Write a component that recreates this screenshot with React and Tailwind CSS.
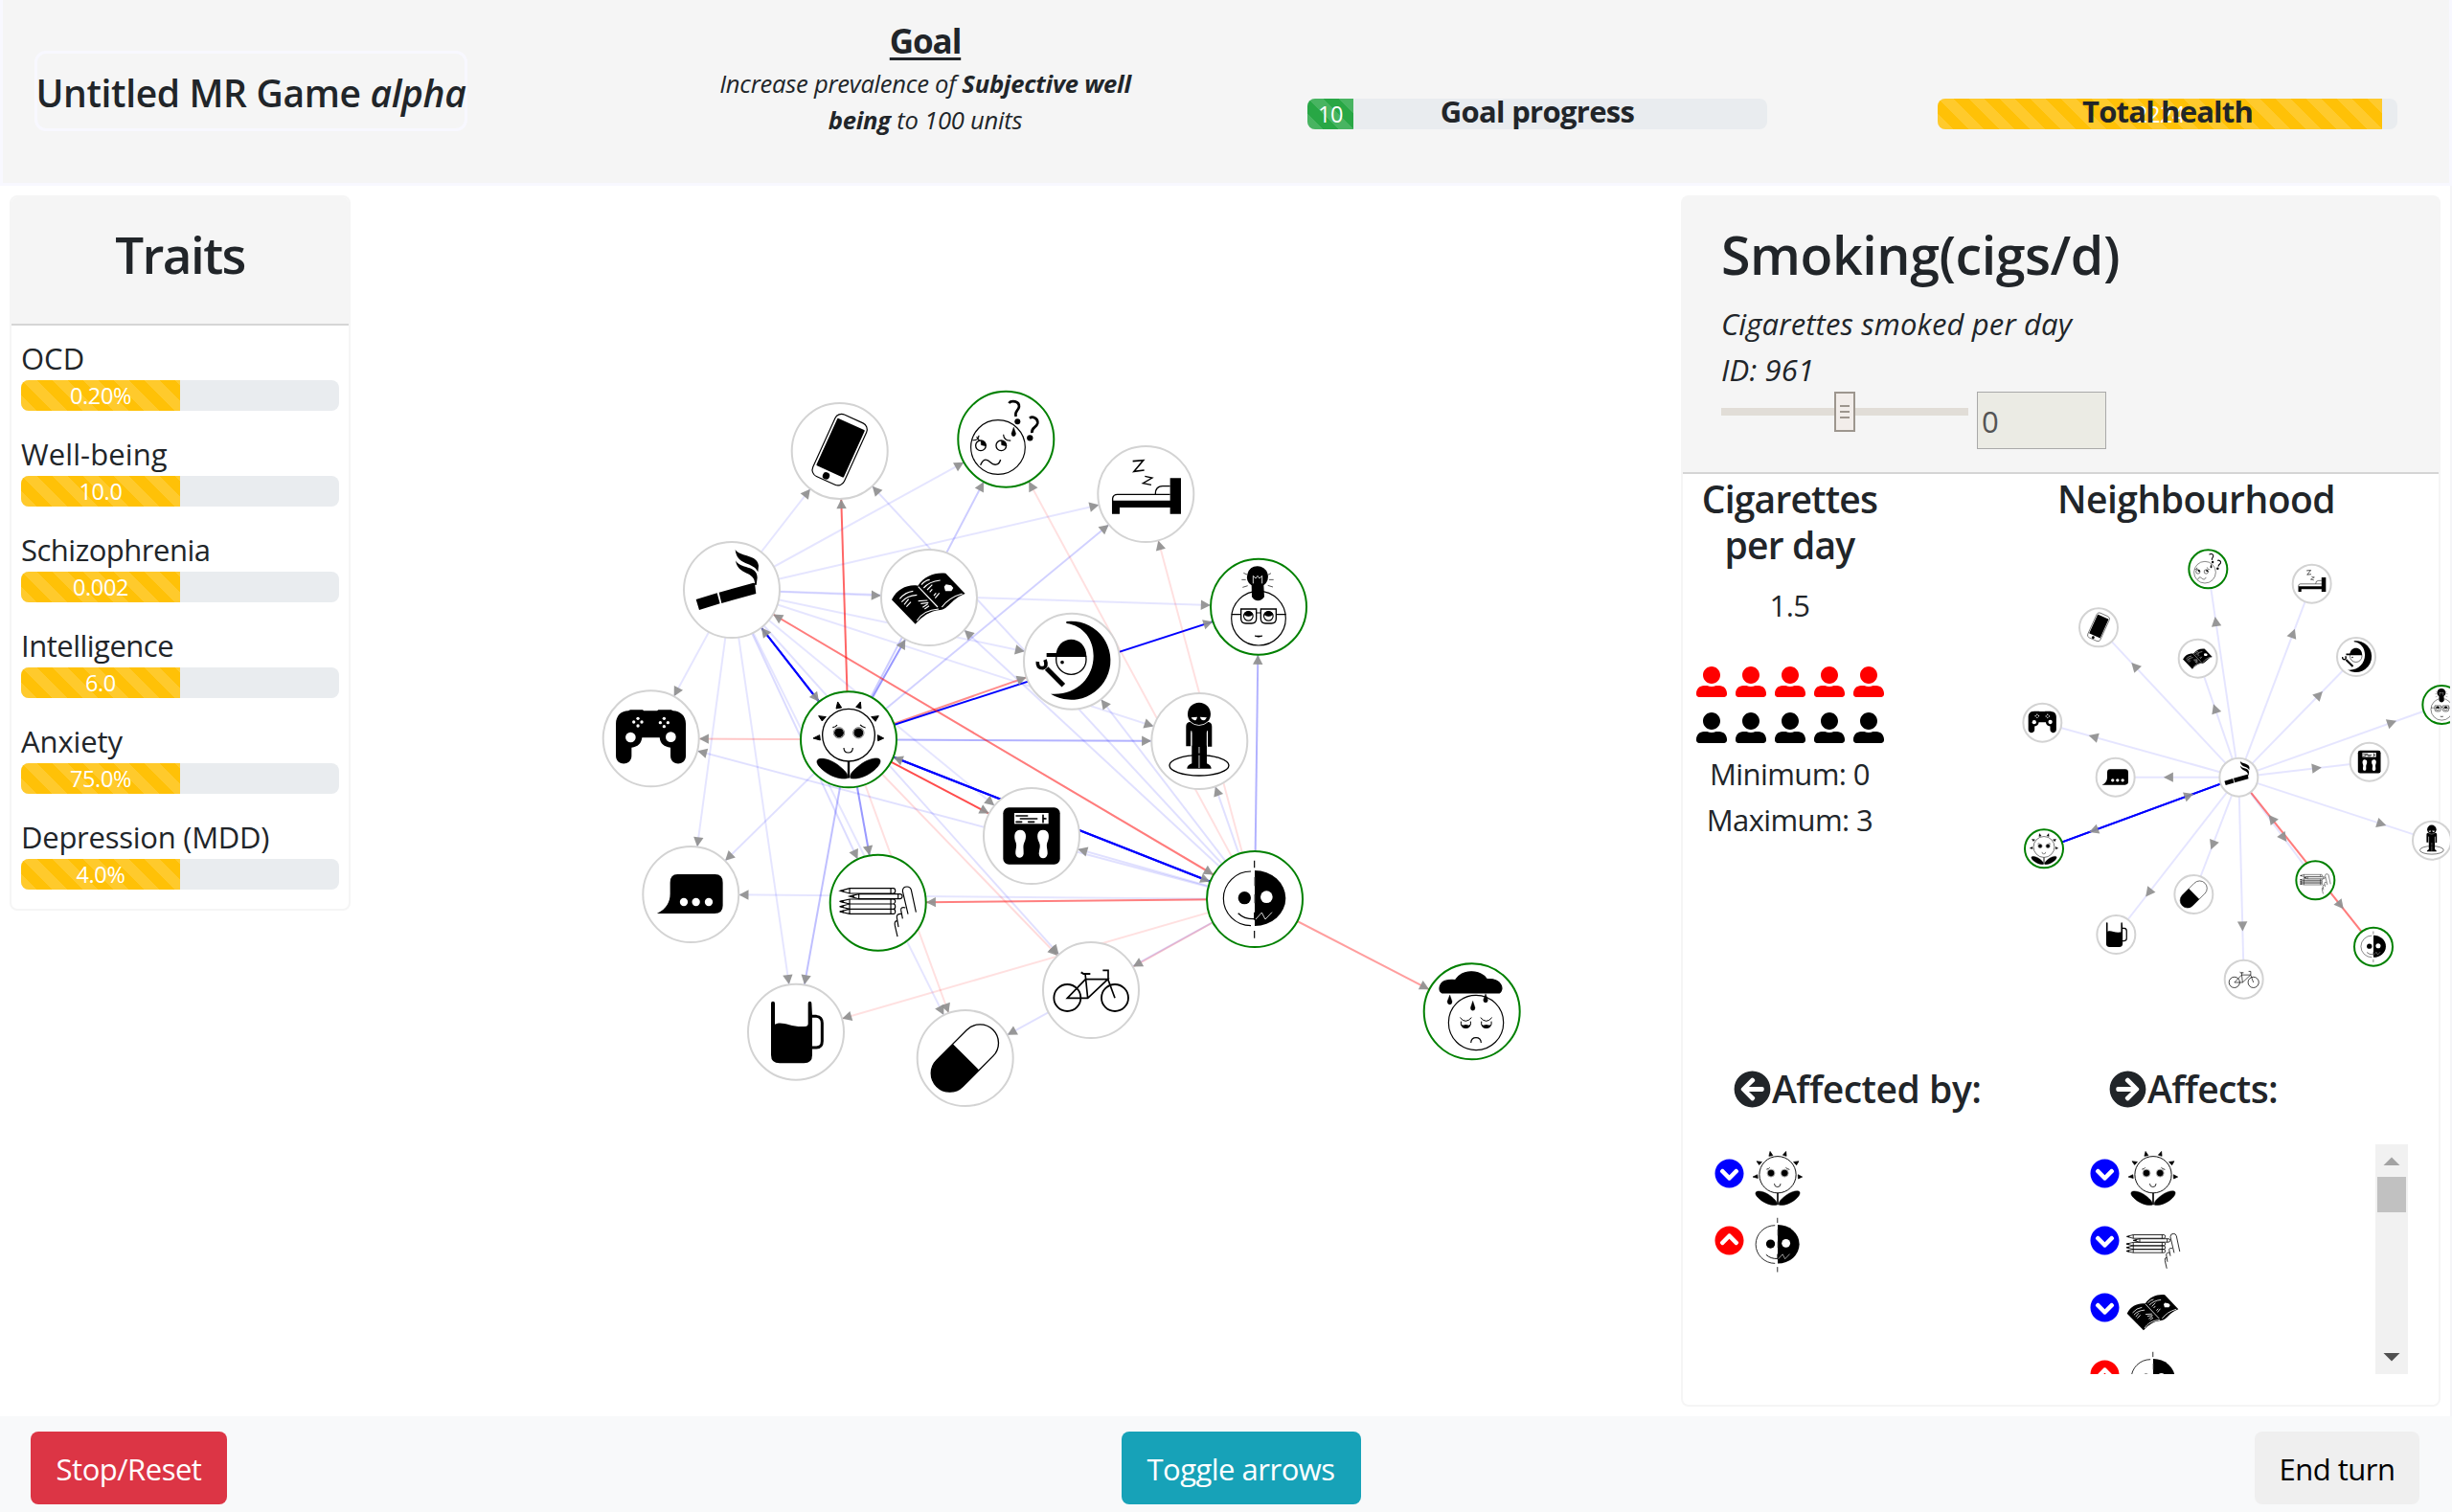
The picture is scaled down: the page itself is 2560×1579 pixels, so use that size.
import React from "react";
import {
  FaUserAlt,
  FaArrowCircleLeft,
  FaArrowCircleRight,
  FaChevronCircleDown,
  FaChevronCircleUp,
} from "react-icons/fa";

const K = "#000";
const W = "#fff";

/* Every glyph is drawn on its own grid; c is the point that sits at the node's centre. */
const GLYPHS = {
  phone: {
    c: [770, 243],
    d: (
      <g transform="translate(770 239) rotate(24.4)">
        <rect x="-54" y="-106" width="108" height="212" rx="22" fill={W} stroke={K} strokeWidth="3.5" />
        <rect x="-47" y="-88" width="94" height="163" rx="3" fill={K} />
        <circle cx="-5" cy="92" r="11" fill={K} />
      </g>
    ),
  },
  smoke: {
    c: [432, 678],
    d: (
      <g fill={K}>
        <path d="M320 708L386 688L395 721L330 741Z M392 686L500 656L504 658L508 690L400 720Z" />
        <path d="M443 551C455 575 514 566 516 602L514 622C500 588 447 604 443 551Z" />
        <path d="M444 586C456 613 513 600 512 640L509 663L504 662C508 618 450 634 444 586Z" />
      </g>
    ),
  },
  book: {
    c: [1050, 702],
    d: (
      <g fill="none">
        <path
          d="M933 709C950 674 985 660 1015 665C1035 634 1070 622 1102 626L1163 690C1120 705 1112 738 1085 741C1052 744 1030 760 1007 785Z"
          fill={K}
        />
        <g stroke={W} strokeWidth="3.5">
          <path d="M1016 668L1077 732" />
          <path d="M1012 775C1025 752 1050 740 1080 738" />
          <path d="M1090 732C1105 712 1125 698 1154 690" />
          <path d="M958 706Q975 685 1000 682M964 716Q980 696 1012 694M972 724L986 707M979 731L993 716" />
          <path d="M1026 662Q1038 648 1052 646M1033 672Q1050 652 1085 648M1044 678L1060 662M1052 685L1060 676" />
          <path d="M1016 713L1045 711M1024 721L1048 718M1030 733L1046 722M1036 738L1050 728M1065 696L1072 688M1069 704L1082 688" />
        </g>
        <path d="M1097 668L1103 661L1119 664L1126 672L1120 682L1101 682Z" fill={W} />
      </g>
    ),
  },
  worry: {
    c: [271, 206],
    d: (
      <g fill="none" stroke={K} strokeWidth="4">
        <circle cx="246" cy="231" r="85" strokeWidth="3.5" />
        <circle cx="192" cy="226" r="16" />
        <circle cx="256" cy="226" r="16" />
        <path d="M192 211A16 16 0 0 1 208 228L193 224Z M256 211A16 16 0 0 1 272 228L257 224Z" fill={K} strokeWidth="1" />
        <path d="M166 209Q186 210 186 194M179 198L188 211M263 191Q264 211 286 210" strokeWidth="3.5" />
        <path d="M191 287C202 262 214 270 223 279S249 290 254 270" />
        <path d="M295 168L302 188Q301 197 294 197Q288 196 288 188Z" fill={K} strokeWidth="1" />
        <path d="M280 93C288 83 313 86 312 104C310 118 297 116 302 135" strokeWidth="8" />
        <path d="M345 140C354 133 372 140 370 156C367 170 350 168 352 186" strokeWidth="8" />
        <circle cx="307" cy="151" r="9" fill={K} stroke="none" />
        <circle cx="346" cy="202" r="9.5" fill={K} stroke="none" />
      </g>
    ),
  },
  bed: {
    c: [709, 378],
    d: (
      <g fill="none" stroke={K} strokeWidth="4">
        <path d="M668 275L701 272L672 307L704 303" strokeWidth="5" />
        <path d="M706 322L729 327L700 344L726 349" />
        <path d="M603 398H785V328H819V440H785V420H627V440H603Z" fill={K} stroke="none" />
        <path d="M605 400V391Q607 379 620 379H785M739 378Q739 353 762 353H785" />
      </g>
    ),
  },
  bulb: {
    c: [1062, 731],
    d: (
      <g fill="none" stroke={K} strokeWidth="3.5">
        <circle cx="1062" cy="767" r="85" />
        <path
          d="M1058 604A33 33 0 0 1 1078 664L1080 700Q1072 712 1060 712Q1048 712 1041 700L1040 664A33 33 0 0 1 1058 604Z"
          fill={K}
          stroke="none"
        />
        <path d="M1045 658V634L1053 642L1059 634L1065 642L1073 634V658" stroke={W} strokeWidth="2.5" />
        <path d="M1015 625L1026 630M1009 646H1022M1012 670L1028 665M1101 626L1091 631M1109 646H1095M1107 669L1091 664" strokeWidth="2" />
        <path d="M1007 738H1055V768Q1055 783 1040 783H1022Q1007 783 1007 768ZM1069 738H1117V768Q1117 783 1102 783H1084Q1069 783 1069 768Z" strokeWidth="4" />
        <path d="M977 755H1007M1117 755H1148M1055 750H1069" />
        <circle cx="1030" cy="760" r="14.5" />
        <circle cx="1093" cy="760" r="14.5" />
        <path d="M1017 756Q1019 745 1030 745Q1041 745 1044 756Q1030 766 1017 756Z M1080 756Q1082 745 1093 745Q1104 745 1107 756Q1093 766 1080 756Z" fill={K} strokeWidth="1" />
        <path d="M1050 822Q1062 829 1074 822Z" fill={K} strokeWidth="2" />
      </g>
    ),
  },
  night: {
    c: [477, 902],
    d: (
      <g fill="none" stroke={K}>
        <path
          d="M460 777A123 123 0 1 1 411 1004C490 1010 545 955 545 885C545 835 515 790 460 783Z"
          fill={K}
          stroke="none"
        />
        <circle cx="475" cy="896" r="47" strokeWidth="4" />
        <path d="M427 888C427 815 523 815 523 888Z M398 876H430V888H398Z" fill={K} stroke="none" />
        <circle cx="447" cy="905" r="5.5" fill={K} stroke="none" />
        <path d="M398 924L451 977" strokeWidth="15" />
        <path d="M370 903Q368 923 386 923Q402 919 393 897" strokeWidth="11" />
      </g>
    ),
  },
  gamepad: {
    c: [179, 1144],
    d: (
      <g fill={W}>
        <path
          d="M69 1098C69 1072 86 1057 108 1057L114 1054H153L156 1057H198L202 1054H242L248 1057C270 1058 288 1072 288 1098V1198C288 1231 240 1231 240 1198V1172C220 1170 208 1160 206 1141H151C148 1160 138 1170 118 1172V1198C118 1231 69 1231 69 1198Z"
          fill={K}
        />
        <circle cx="115" cy="1140" r="16" />
        <circle cx="241" cy="1139" r="16" />
        <g>
          <circle cx="138" cy="1081" r="5" />
          <circle cx="138" cy="1104" r="5" />
          <circle cx="125" cy="1092" r="5" />
          <circle cx="150" cy="1092" r="5" />
          <circle cx="220" cy="1081" r="5" />
          <circle cx="220" cy="1106" r="5" />
          <circle cx="208" cy="1094" r="5" />
          <circle cx="232" cy="1094" r="5" />
        </g>
      </g>
    ),
  },
  sun: {
    c: [798, 1147],
    d: (
      <g fill={K} stroke={K} strokeWidth="3.5">
        <circle cx="798" cy="1133" r="82" fill="none" strokeWidth="4" />
        <path
          d="M764 1029L759 1050L776 1047ZM835 1029L821 1045L837 1050ZM704 1073L727 1076L715 1089ZM892 1073L869 1076L882 1090ZM687 1143L707 1133L709 1149ZM908 1143L889 1133L890 1151Z"
          strokeWidth="3"
        />
        <circle cx="768" cy="1126" r="13" />
        <circle cx="829" cy="1126" r="13" />
        <circle cx="768" cy="1126" r="17" fill="none" strokeWidth="1.5" />
        <circle cx="829" cy="1126" r="17" fill="none" strokeWidth="1.5" />
        <path d="M748 1109Q758 1108 762 1101M834 1101Q840 1108 851 1110M783 1173Q783 1188 797 1188Q811 1188 811 1173" fill="none" />
        <path d="M798 1215V1268" strokeWidth="7" />
        <path d="M700 1212C705 1203 735 1205 765 1227C785 1243 798 1255 794 1268C775 1273 740 1263 717 1242C704 1231 696 1220 700 1212ZM896 1210C891 1202 861 1205 833 1227C813 1243 800 1255 804 1268C823 1273 856 1263 879 1242C892 1231 900 1219 896 1210Z" strokeWidth="2" />
      </g>
    ),
  },
  man: {
    c: [877, 1152],
    d: (
      <g fill={K}>
        <ellipse cx="876" cy="1228" rx="93" ry="32" fill="none" stroke={K} strokeWidth="4" />
        <circle cx="876" cy="1067" r="36" />
        <path d="M846 1092H905Q916 1094 916 1106V1169H903V1120H900V1222Q914 1228 914 1238H838Q838 1228 853 1222V1120H850V1168H835V1106Q835 1094 846 1092Z" />
        <path d="M851 1078L870 1076Q868 1087 862 1087Q854 1086 851 1078ZM879 1076L900 1078Q896 1087 889 1087Q881 1086 879 1076Z" fill={W} />
        <path d="M845 1089Q875 1116 907 1089M852 1124V1166M901 1124V1166M876 1170V1190M876 1196V1236" fill="none" stroke={W} strokeWidth="2.5" />
      </g>
    ),
  },
  scale: {
    c: [291, 399],
    d: (
      <g fill={W}>
        <rect x="202" y="310" width="178" height="178" rx="18" fill={K} />
        <rect x="237" y="327" width="107" height="34" />
        <path d="M243 336H278M256 345H308M243 355H260M281 355H299M327 334V356M327 344L336 345" stroke={K} strokeWidth="5" strokeLinecap="round" />
        <path d="M255 380C275 380 277 402 268 420C263 432 267 440 266 455C264 471 243 471 241 455C240 442 246 432 242 420C234 400 237 380 255 380Z" />
        <path d="M327 380C307 380 306 402 315 420C320 432 315 440 314 455C316 473 338 473 341 455C342 442 336 432 340 420C349 400 346 380 327 380Z" />
      </g>
    ),
  },
  split: {
    c: [210, 237],
    d: (
      <g fill="none" stroke={K} strokeWidth="3.5">
        <path d="M198 150A86 85 0 0 0 198 320" />
        <path d="M210 147A97 87 0 0 1 210 321Z" fill={K} stroke="none" />
        <path d="M209 116V139M209 336V359M209 278V302" />
        <path d="M209 168V196M209 222V250" stroke="#999" />
        <circle cx="178" cy="233" r="20" fill={K} stroke="none" />
        <circle cx="247" cy="230" r="19" fill={W} stroke="none" />
        <path d="M158 281Q178 300 209 299" strokeWidth="4" />
        <path d="M213 300L232 279L243 300L264 278" stroke={W} strokeWidth="2.5" />
      </g>
    ),
  },
  chat: {
    c: [304, 582],
    d: (
      <g fill={W}>
        <path d="M239 545Q239 519 262 519H380Q404 519 404 545V617Q404 642 378 642H198C228 628 239 606 239 580Z" fill={K} />
        <circle cx="282" cy="606" r="12.5" />
        <circle cx="320" cy="606" r="12.5" />
        <circle cx="360" cy="606" r="12.5" />
      </g>
    ),
  },
  pencils: {
    c: [890, 608],
    d: (
      <g fill={W} stroke={K} strokeWidth="3.5">
        <path d="M801 563H938Q944 563 944 571T938 579H801L772 571ZM801 563V579M930 563V579" />
        <path d="M801 597H938Q944 597 944 604T938 612H801L770 604ZM801 612H938Q944 612 944 620T938 628H801L770 620ZM801 628H938Q944 628 944 636T938 643H801L770 636ZM801 597V643M930 597V643" />
        <path d="M830 581H958Q966 581 966 588T958 596H830L801 588ZM830 581V596M953 581V596" />
        <path d="M772 571L783 568V574ZM801 588L815 584V592ZM770 604L782 601V608ZM770 620L782 617V624ZM770 636L782 632V640Z" fill={K} strokeWidth="1" />
        <path d="M984 644L967 572Q967 558 981 558Q991 558 994 568L1009 638" fill="none" />
        <path d="M976 624Q960 620 962 632L967 658M963 643Q947 642 949 655L954 684M951 665Q940 664 943 680L951 714" fill="none" />
      </g>
    ),
  },
  mug: {
    c: [633, 1013],
    d: (
      <g fill={K}>
        <path d="M555 923Q555 917 561 917Q567 917 567 923V989C592 976 615 1000 666 995Q671 994 671 988V923Q671 917 677 917Q682 917 682 923L684 960V1085Q684 1111 658 1111H582Q555 1111 555 1085Z" />
        <path d="M680 964H697Q715 966 715 985V1042Q715 1062 697 1062H680" fill="none" stroke={K} strokeWidth="9" />
      </g>
    ),
  },
  pill: {
    c: [83, 1095],
    d: (
      <g transform="translate(82 1095) rotate(-45)">
        <rect x="-125" y="-58" width="250" height="116" rx="58" fill={W} stroke={K} strokeWidth="4" />
        <path d="M5 -58H-67A58 58 0 0 0 -67 58H5Z" fill={K} />
      </g>
    ),
  },
  bike: {
    c: [477, 882],
    d: (
      <g fill="none" stroke={K} strokeWidth="5">
        <circle cx="403" cy="906" r="42" strokeWidth="5.5" />
        <circle cx="552" cy="906" r="42" strokeWidth="5.5" />
        <path d="M403 907L460 848H530L467 907ZM467 907L459 830M552 907L531 850V820H514" />
        <path d="M446 826L454 831H475" strokeWidth="6" />
      </g>
    ),
  },
  cloud: {
    c: [890, 589],
    d: (
      <g fill="none" stroke={K} strokeWidth="3.5">
        <circle cx="903" cy="624" r="86" />
        <path d="M797 531C783 523 787 494 815 491Q830 489 838 491C860 456 915 456 937 488C985 485 992 521 976 531Z" fill={K} />
        <path d="M821 537L828 557Q828 567 821 567T813 557ZM893 556L900 577Q900 586 893 586T886 577ZM933 533L940 552Q940 561 933 561T926 552Z" fill={K} strokeWidth="1" />
        <path d="M853 608Q870 630 889 608M917 608Q935 630 953 608M856 620V630Q858 641 871 641T886 630V620M920 620V630Q922 641 935 641T951 630V620" strokeWidth="3" />
        <path d="M857 630H885Q883 641 871 641T857 630ZM921 630H950Q948 641 935 641T921 630Z" fill={K} stroke="none" />
        <path d="M860 632Q871 626 882 632M924 632Q935 626 947 632" stroke={W} strokeWidth="2" />
        <path d="M887 687Q888 671 903 671T919 687" />
      </g>
    ),
  },
};

function Glyph({ name, x = 0, y = 0, scale = 1 }) {
  const g = GLYPHS[name];
  return (
    <g transform={`translate(${x} ${y}) scale(${scale / 3}) translate(${-g.c[0]} ${-g.c[1]})`}>{g.d}</g>
  );
}

const GREEN = ["worry", "bulb", "sun", "split", "pencils", "cloud"];

const NODES = {
  phone: [876.7, 471],
  worry: [1050.3, 458.7],
  bed: [1196.3, 516],
  smoke: [764, 616],
  book: [970, 624],
  bulb: [1314, 633.7],
  night: [1119, 690.7],
  gamepad: [679.7, 771.3],
  sun: [886, 772.3],
  man: [1252.3, 774],
  scale: [1077, 873],
  split: [1310, 939],
  chat: [721.3, 934],
  pencils: [916.7, 942.7],
  bike: [1139, 1034],
  mug: [831, 1077.7],
  pill: [1007.7, 1105],
  cloud: [1536.7, 1056.3],
};

const B = "#0000ff";
const R = "#ff0000";

const EDGES = [
  ["smoke", "phone", B, 0.1],
  ["smoke", "worry", B, 0.1],
  ["smoke", "bed", B, 0.1],
  ["smoke", "book", B, 0.1],
  ["smoke", "bulb", B, 0.1],
  ["smoke", "night", B, 0.1],
  ["smoke", "man", B, 0.1],
  ["smoke", "scale", B, 0.1],
  ["smoke", "gamepad", B, 0.1],
  ["smoke", "chat", B, 0.1],
  ["smoke", "mug", B, 0.1],
  ["smoke", "pencils", B, 0.14],
  ["smoke", "pill", B, 0.1],
  ["smoke", "bike", B, 0.12],
  ["sun", "phone", R, 0.6],
  ["sun", "gamepad", R, 0.22],
  ["sun", "worry", B, 0.2],
  ["sun", "book", B, 0.4],
  ["sun", "bed", B, 0.18],
  ["sun", "night", R, 0.45],
  ["sun", "bulb", B, 1],
  ["sun", "man", B, 0.3],
  ["sun", "scale", R, 0.7],
  ["sun", "chat", B, 0.12],
  ["sun", "pencils", B, 0.4],
  ["sun", "mug", B, 0.25],
  ["sun", "pill", R, 0.12],
  ["sun", "bike", R, 0.14],
  ["split", "gamepad", B, 0.12],
  ["split", "scale", B, 0.12],
  ["split", "chat", B, 0.1],
  ["split", "pencils", R, 0.5],
  ["split", "bulb", B, 0.3],
  ["split", "worry", R, 0.12],
  ["split", "bed", R, 0.12],
  ["split", "man", B, 0.12],
  ["split", "night", B, 0.12],
  ["split", "book", B, 0.12],
  ["split", "phone", B, 0.12],
  ["split", "mug", R, 0.12],
  ["split", "bike", R, 0.2],
  ["split", "pill", B, 0.12],
  ["split", "cloud", R, 0.38],
  ["sun", "smoke", B, 1],
  ["smoke", "sun", B, 1],
  ["smoke", "split", R, 0.3],
  ["split", "smoke", R, 0.3],
  ["split", "sun", B, 1],
  ["sun", "split", B, 1],
];

const LOCAL_NODES = {
  worry: [646, 103],
  bed: [971, 149],
  phone: [303, 286],
  book: [614, 383],
  night: [1110, 378],
  gamepad: [127, 584],
  bulb: [1378, 528],
  scale: [1151, 707],
  chat: [356, 755],
  smoke: [742, 755],
  sun: [132, 979],
  man: [1347, 953],
  pencils: [982, 1078],
  pill: [601, 1122],
  mug: [358, 1248],
  split: [1164, 1286],
  bike: [758, 1388],
};

const LOCAL_POINTS = Object.fromEntries(
  Object.entries(LOCAL_NODES).map(([k, [x, y]]) => [k, [x / 3, y / 3]])
);

const LOCAL_EDGES = [
  ...["worry", "bed", "phone", "book", "night", "gamepad", "bulb", "scale", "chat", "man", "pencils", "pill", "mug", "bike"].map(
    (t) => ["smoke", t, B, 0.1]
  ),
  ["sun", "smoke", B, 1],
  ["smoke", "sun", B, 1],
  ["split", "smoke", R, 0.3],
  ["smoke", "split", R, 0.3],
];

function Network({ nodes, edges, radius }) {
  return (
    <>
      {edges.map(([from, to, color, opacity]) => (
        <line
          key={from + to}
          x1={nodes[from][0]}
          y1={nodes[from][1]}
          x2={nodes[to][0]}
          y2={nodes[to][1]}
          stroke={color}
          strokeOpacity={opacity}
          strokeWidth="2"
        />
      ))}
      {edges.map(([from, to]) => {
        const [x1, y1] = nodes[from];
        const [x2, y2] = nodes[to];
        const angle = (Math.atan2(y2 - y1, x2 - x1) * 180) / Math.PI;
        return (
          <path
            key={from + to}
            d="M-60.2 -5.2L-50.2 0L-60.2 5.2Z"
            fill="#909090"
            fillOpacity="0.93"
            transform={`translate(${x2} ${y2}) rotate(${angle})`}
          />
        );
      })}
      {Object.entries(nodes).map(([name, [x, y]]) => (
        <g key={name}>
          <circle cx={x} cy={y} r={radius} fill="#fff" stroke={GREEN.includes(name) ? "#008000" : "#d3d3d3"} strokeWidth="2" />
          <Glyph name={name} x={x} y={y} scale={radius / 50} />
        </g>
      ))}
    </>
  );
}

const STRIPES =
  "bg-[linear-gradient(45deg,rgba(255,255,255,.15)_25%,transparent_25%,transparent_50%,rgba(255,255,255,.15)_50%,rgba(255,255,255,.15)_75%,transparent_75%,transparent)] bg-[length:32px_32px]";

const TRAITS = [
  ["OCD", "0.20%", "tracking-[0px]"],
  ["Well-being", "10.0", "tracking-[0.1px]"],
  ["Schizophrenia", "0.002", "tracking-[-0.5px]"],
  ["Intelligence", "6.0", "tracking-[-0.5px]"],
  ["Anxiety", "75.0%", "tracking-[-0.1px]"],
  ["Depression (MDD)", "4.0%", "tracking-[-0.25px]"],
];

function Bar({ fill, value, color }) {
  return (
    <div className="flex h-8 w-full overflow-hidden rounded-lg bg-[#e9ecef] text-[23.5px] leading-8 tracking-[-0.4px] text-white">
      <div className={`text-center ${color} ${STRIPES}`} style={{ width: fill }}>
        {value}
      </div>
    </div>
  );
}

function Impact({ name, up }) {
  const Icon = up ? FaChevronCircleUp : FaChevronCircleDown;
  return (
    <li className="flex h-[70px] items-start gap-[5px]">
      <Icon className={`mt-[10px] size-[31px] shrink-0 ${up ? "text-[#ff0000]" : "text-[#0000ff]"}`} />
      <svg className="h-[60px] w-[60px] shrink-0" viewBox="-30 -30 60 60">
        <Glyph name={name} scale={0.7} />
      </svg>
    </li>
  );
}

export default function App() {
  return (
    <div className="flex h-[1579px] w-[2560px] flex-col overflow-hidden bg-white font-['Open_Sans','Noto_Sans',sans-serif] text-[#212529]">
      <header className="flex h-[194px] shrink-0 items-start border-x-[3px] border-b-[3px] border-[#f8f8ff] bg-[#f5f5f5]">
        <h1 className="mt-[53px] ml-[33px] flex h-[84px] w-[452px] items-center justify-center rounded-xl border-[3px] border-[#f8f8ff] pt-[4px] text-[39px] font-semibold tracking-[-0.35px] whitespace-nowrap">
          <span>
            Untitled MR Game <em>alpha</em>
          </span>
        </h1>
        <div className="mt-[19px] ml-[228px] w-[500px] text-center">
          <h2 className="text-[35px] leading-[48px] font-bold tracking-[-1.1px] underline decoration-[3px] underline-offset-[4px]">Goal</h2>
          <p className="mt-[2px] text-[25.6px] leading-[38px] tracking-[-0.25px] italic">
            Increase prevalence of <b>Subjective well</b>
            <br />
            <b>being</b> to 100 units
          </p>
        </div>
        <div className="relative mt-[103px] ml-[149px] w-[480px]">
          <Bar fill="10%" value="10" color="bg-[#28a745]" />
          <span className="absolute inset-x-0 top-[-11px] text-center text-[31px] leading-[48px] font-bold tracking-[-0.7px]">
            Goal progress
          </span>
        </div>
        <div className="relative mt-[103px] ml-[178px] w-[480px]">
          <Bar fill="96.7%" value="2224" color="bg-[#ffc107]" />
          <span className="absolute inset-x-0 top-[-11px] text-center text-[31px] leading-[48px] font-bold tracking-[-0.8px]">
            Total health
          </span>
        </div>
      </header>

      <main className="flex h-[1285px] shrink-0 items-start border-r-2 border-[#f5f5f8] pt-[10px]">
        <section className="ml-[10px] h-[747px] w-[356px] shrink-0 overflow-hidden rounded-lg border-2 border-[#f5f5f5]">
          <h2 className="flex h-[134px] items-center justify-center border-b-2 border-[#d5d5d5] bg-[#f5f5f5] pb-[12px] text-[53px] font-semibold tracking-[-1.6px]">
            Traits
          </h2>
          <ul className="flex flex-col gap-5 px-[10px] pt-[9px]">
            {TRAITS.map(([name, value, tracking]) => (
              <li key={name}>
                <div className={`h-12 text-[31px] leading-[50px] ${tracking}`}>{name}</div>
                <Bar fill="50%" value={value} color="bg-[#ffc107]" />
              </li>
            ))}
          </ul>
        </section>

        <svg className="-mt-[10px] h-[1285px] w-[1389px] shrink-0" viewBox="366 194 1389 1285">
          <Network nodes={NODES} edges={EDGES} radius={50} />
        </svg>

        <section className="flex h-[1265px] w-[793px] shrink-0 flex-col rounded-lg border-2 border-[#f5f5f5]">
          <div className="h-[289px] shrink-0 border-b-2 border-[#d5d5d5] bg-[#f5f5f5] pt-[24px] pl-[40px]">
            <h2 className="text-[55.5px] leading-[72px] font-semibold tracking-[-0.45px]">Smoking(cigs/d)</h2>
            <p className="mt-[13px] text-[31px] leading-[47.5px] tracking-[0.15px] italic">
              Cigarettes smoked per day
              <br />
              ID: 961
            </p>
            <div className="-mt-px flex items-start gap-[9px]">
              <div className="flex h-[42px] w-[258px] items-center">
                <div className="h-2 w-[118px] bg-[#e1ddd7]" />
                <div className="flex h-[42px] w-[22px] shrink-0 flex-col items-center justify-center gap-[4px] border-2 border-[#9d968e] bg-[#f2edea]">
                  <i className="h-[2px] w-[10px] bg-[#9d968e]" />
                  <i className="h-[2px] w-[10px] bg-[#9d968e]" />
                  <i className="h-[2px] w-[10px] bg-[#9d968e]" />
                </div>
                <div className="h-2 flex-1 bg-[#e1ddd7]" />
              </div>
              <div className="h-[60px] w-[135px] border border-[#a9a9a9] bg-[#ebebe4] pl-1 text-[31px] leading-[60px] text-[#545454]">0</div>
            </div>
          </div>

          <div className="flex h-[607px] shrink-0">
            <div className="w-[223px] shrink-0 pt-[2px] text-center text-[31px] leading-[48px] tracking-[-0.6px]">
              <h3 className="text-[39px] font-semibold tracking-[-0.8px]">
                Cigarettes
                <br />
                per day
              </h3>
              <p className="mt-[15px]">1.5</p>
              <div className="mt-[40px] flex flex-col gap-4 pl-[14px]">
                {["text-[#ff0000]", "text-black"].map((color) => (
                  <div key={color} className={`flex gap-[9px] ${color}`}>
                    {[0, 1, 2, 3, 4].map((i) => (
                      <FaUserAlt key={i} className="size-8" />
                    ))}
                  </div>
                ))}
              </div>
              <p className="mt-[8px]">
                Minimum: 0
                <br />
                Maximum: 3
              </p>
            </div>
            <div className="ml-[110px] pt-[2px]">
              <h3 className="w-[406px] text-center text-[39px] leading-[48px] font-semibold tracking-[-0.5px]">Neighbourhood</h3>
              <svg className="mt-[15px] h-[500px] w-[468px]" viewBox="0 0 468 500">
                <Network nodes={LOCAL_POINTS} edges={LOCAL_EDGES} radius={20} />
              </svg>
            </div>
          </div>

          <div className="flex">
            <div className="w-[392px] pl-[33px]">
              <h3 className="mt-[11px] flex items-center gap-px pl-[20px] text-[39px] leading-[48px] font-semibold tracking-[-0.45px]">
                <FaArrowCircleLeft className="size-[39px]" />
                Affected by:
              </h3>
              <ul className="mt-[39px]">
                <Impact name="sun" />
                <Impact name="split" up />
              </ul>
            </div>
            <div className="w-[365px] pl-[33px]">
              <h3 className="mt-[11px] flex items-center gap-px pl-[20px] text-[39px] leading-[48px] font-semibold tracking-[-0.6px]">
                <FaArrowCircleRight className="size-[39px]" />
                Affects:
              </h3>
              <div className="mt-[34px] flex h-[240px] justify-between overflow-hidden">
                <ul className="pt-[5px]">
                  <Impact name="sun" />
                  <Impact name="pencils" />
                  <Impact name="book" />
                  <Impact name="split" up />
                </ul>
                <div className="flex h-full w-[34px] shrink-0 flex-col items-center bg-[#f1f1f1]">
                  <svg className="h-[34px] w-[34px]" viewBox="0 0 34 34">
                    <path d="M17 13.5L25.5 22H8.5Z" fill="#a3a3a3" />
                  </svg>
                  <div className="h-[37px] w-[30px] bg-[#c1c1c1]" />
                  <svg className="mt-auto h-[34px] w-[34px]" viewBox="0 0 34 34">
                    <path d="M8.5 12H25.5L17 20.5Z" fill="#505050" />
                  </svg>
                </div>
              </div>
            </div>
          </div>
        </section>
      </main>

      <footer className="flex h-[100px] shrink-0 items-start justify-between bg-[#f8f9fa] pt-4 pr-[34px] pl-8 text-[31px] leading-[78px] tracking-[-0.5px]">
        <button className="h-[76px] w-[205px] rounded-lg bg-[#dc3545] text-white">Stop/Reset</button>
        <button className="h-[76px] w-[250px] rounded-lg bg-[#17a2b8] text-white">Toggle arrows</button>
        <button className="h-[76px] w-[172px] rounded-lg bg-[#efefef] text-black">End turn</button>
      </footer>
    </div>
  );
}
